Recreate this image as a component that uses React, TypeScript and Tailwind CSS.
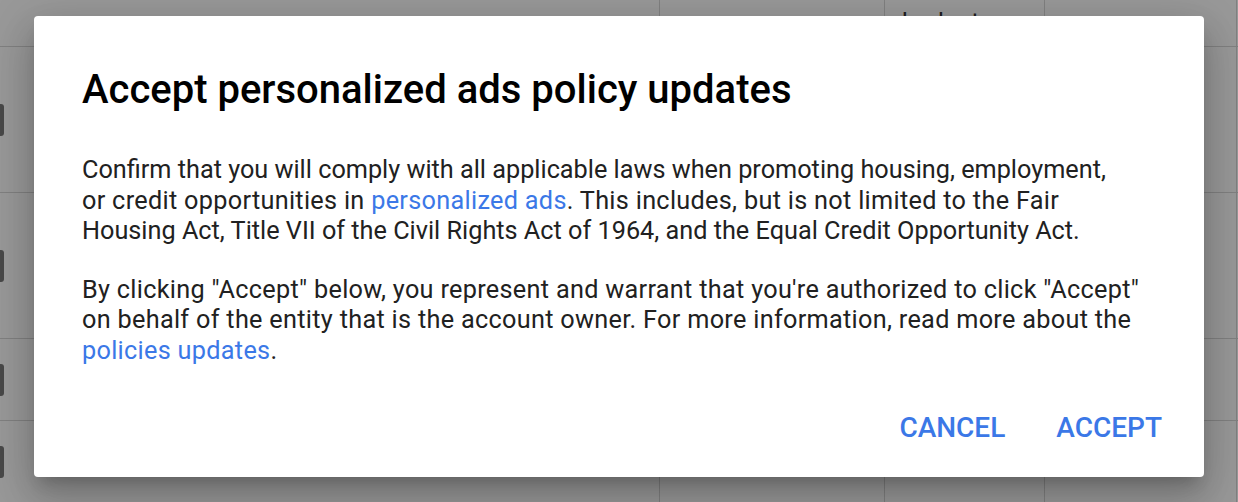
const rows = [47, 146, 146, 82, 81];

function BackgroundTable() {
  return (
    <div className="flex flex-col bg-white">
      {rows.map((h, i) => (
        <div
          key={i}
          className={`flex ${i < rows.length - 1 ? "border-b border-[#d8d8d8]" : ""}`}
          style={{ height: h }}
        >
          <div className="flex w-[659px] items-center">
            {i > 0 && <div className="h-[32px] w-[4px] rounded-r-[3px] bg-[#7a7a7a]" />}
          </div>
          <div className="w-[225px] border-l border-[#d8d8d8]" />
          <div className="w-[160px] border-l border-[#d8d8d8] pl-[17px] pt-[8px] text-[25px] leading-[30px] text-[#333]">
            {i === 0 ? "budget" : ""}
          </div>
          <div className="w-[192px] border-l border-[#d8d8d8]" />
          <div className="flex-1 border-l border-[#d8d8d8]" />
        </div>
      ))}
    </div>
  );
}

export default function App() {
  return (
    <div className="relative h-[502px] w-[1238px] overflow-hidden font-['Roboto',sans-serif]">
      <BackgroundTable />
      <div className="absolute inset-0 flex items-start justify-center bg-black/40 pt-[16px]">
        <div className="flex h-[461px] w-[1170px] flex-col rounded-[4px] bg-white shadow-[0_11px_15px_-7px_rgba(0,0,0,0.2),0_24px_38px_3px_rgba(0,0,0,0.14),0_9px_46px_8px_rgba(0,0,0,0.12)]">
          <h2 className="px-[48px] pt-[50px] text-[40px] font-medium leading-[48px] text-[#000]">
            Accept personalized ads policy updates
          </h2>
          <div className="flex flex-col gap-[28px] px-[48px] pt-[41px] text-[25.25px] leading-[30.5px] text-[#212121]">
            <p>
              Confirm that you will comply with all applicable laws when promoting housing, employment,
              <br />
              <span className="tracking-[0.3px]">
                or credit opportunities in{" "}
                <a className="text-[#3b78e7]" href="#">
                  personalized ads
                </a>
                . This includes, but is not limited to the Fair
              </span>
              <br />
              Housing Act, Title VII of the Civil Rights Act of 1964, and the Equal Credit Opportunity Act.
            </p>
            <p className="tracking-[0.3px]">
              By clicking "Accept" below, you represent and warrant that you're authorized to click "Accept"
              <br />
              on behalf of the entity that is the account owner. For more information, read more about the
              <br />
              <a className="text-[#3b78e7]" href="#">
                policies updates
              </a>
              .
            </p>
          </div>
          <div className="mt-auto flex justify-end gap-[19px] px-[26px] pb-[21px]">
            <button className="px-[16px] py-[10px] text-[28px] font-medium leading-[36px] text-[#3b78e7]">
              CANCEL
            </button>
            <button className="px-[16px] py-[10px] text-[28px] font-medium leading-[36px] text-[#3b78e7]">
              ACCEPT
            </button>
          </div>
        </div>
      </div>
    </div>
  );
}
